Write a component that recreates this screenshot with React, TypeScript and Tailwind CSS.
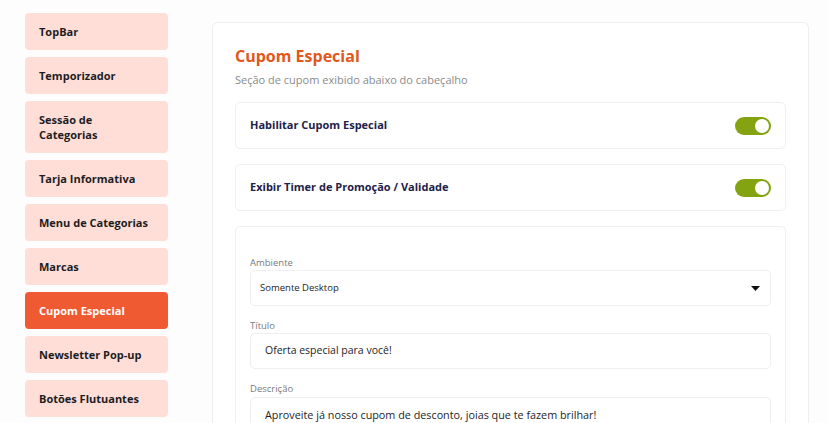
import { useState } from "react";

const sections = [
  "TopBar",
  "Temporizador",
  "Sessão de Categorias",
  "Tarja Informativa",
  "Menu de Categorias",
  "Marcas",
  "Cupom Especial",
  "Newsletter Pop-up",
  "Botões Flutuantes",
];

function Toggle({ on, onChange }: { on: boolean; onChange: () => void }) {
  return (
    <button
      onClick={onChange}
      className={`flex h-[18px] w-[36px] items-center rounded-full px-[2px] ${
        on ? "justify-end bg-[#84a311]" : "justify-start bg-gray-300"
      }`}
    >
      <span className="h-[14px] w-[14px] rounded-full bg-white" />
    </button>
  );
}

export default function App() {
  const [active, setActive] = useState("Cupom Especial");
  const [enabled, setEnabled] = useState(true);
  const [timer, setTimer] = useState(true);

  return (
    <div
      className="flex h-[423px] w-[828px] gap-[44px] overflow-hidden bg-[#fdfdfd] pl-[25px] pt-[13px] text-[#1f1f1f]"
      style={{ fontFamily: "'Open Sans', 'Noto Sans', sans-serif" }}
    >
      {/* Sidebar */}
      <div className="flex w-[143px] shrink-0 flex-col gap-[7px]">
        {sections.map((s) => (
          <button
            key={s}
            onClick={() => setActive(s)}
            className={`flex items-center rounded-[4px] py-[11px] pl-[14px] pr-[8px] text-left text-[11px] font-bold leading-[15px] ${
              s === "Sessão de Categorias" ? "pr-[50px]" : ""
            } ${active === s ? "bg-[#ef5a32] text-white" : "bg-[#ffded8] text-[#1d1d1f]"}`}
          >
            {s}
          </button>
        ))}
      </div>

      {/* Content */}
      <div className="mt-[9px] w-[597px] shrink-0 rounded-t-[6px] border border-b-0 border-[#efefef] bg-white px-[22px] pt-[22px]">
        <h1 className="text-[16px] font-bold leading-[22px] text-[#e0581c]">Cupom Especial</h1>
        <p className="mt-[5px] text-[11px] leading-[16px] text-[#8a8a8a]">
          Seção de cupom exibido abaixo do cabeçalho
        </p>

        <div className="mt-[14px] flex h-[47px] items-center justify-between rounded-[5px] border border-[#efefef] px-[14px]">
          <span className="text-[11px] font-bold text-[#1e2149]">Habilitar Cupom Especial</span>
          <Toggle on={enabled} onChange={() => setEnabled(!enabled)} />
        </div>

        <div className="mt-[15px] flex h-[47px] items-center justify-between rounded-[5px] border border-[#efefef] px-[14px]">
          <span className="text-[11px] font-bold text-[#1e2149]">Exibir Timer de Promoção / Validade</span>
          <Toggle on={timer} onChange={() => setTimer(!timer)} />
        </div>

        <div className="mt-[15px] rounded-t-[5px] border border-b-0 border-[#efefef] px-[14px] pt-[29px]">
          <label className="block text-[9.5px] leading-[14px] text-[#7a7a7a]">Ambiente</label>
          <div className="flex h-[36px] items-center justify-between rounded-[5px] border border-[#efefef] pl-[9px] pr-[10px]">
            <span className="text-[9.5px] text-[#1d1d1f]">Somente Desktop</span>
            <svg width="9" height="5" viewBox="0 0 9 5">
              <path d="M0 0h9L4.5 5z" fill="#111" />
            </svg>
          </div>

          <label className="mt-[13px] block text-[9.5px] leading-[14px] text-[#7a7a7a]">Título</label>
          <div className="flex h-[36px] items-center rounded-[5px] border border-[#efefef] px-[14px]">
            <span className="text-[10.5px] text-[#1d1d1f]">Oferta especial para você!</span>
          </div>

          <label className="mt-[13px] block text-[9.5px] leading-[14px] text-[#7a7a7a]">Descrição</label>
          <div className="mt-[1px] flex h-[36px] items-center rounded-[5px] border border-[#efefef] px-[14px]">
            <span className="text-[10.8px] text-[#1d1d1f]">
              Aproveite já nosso cupom de desconto, joias que te fazem brilhar!
            </span>
          </div>
        </div>
      </div>
    </div>
  );
}
